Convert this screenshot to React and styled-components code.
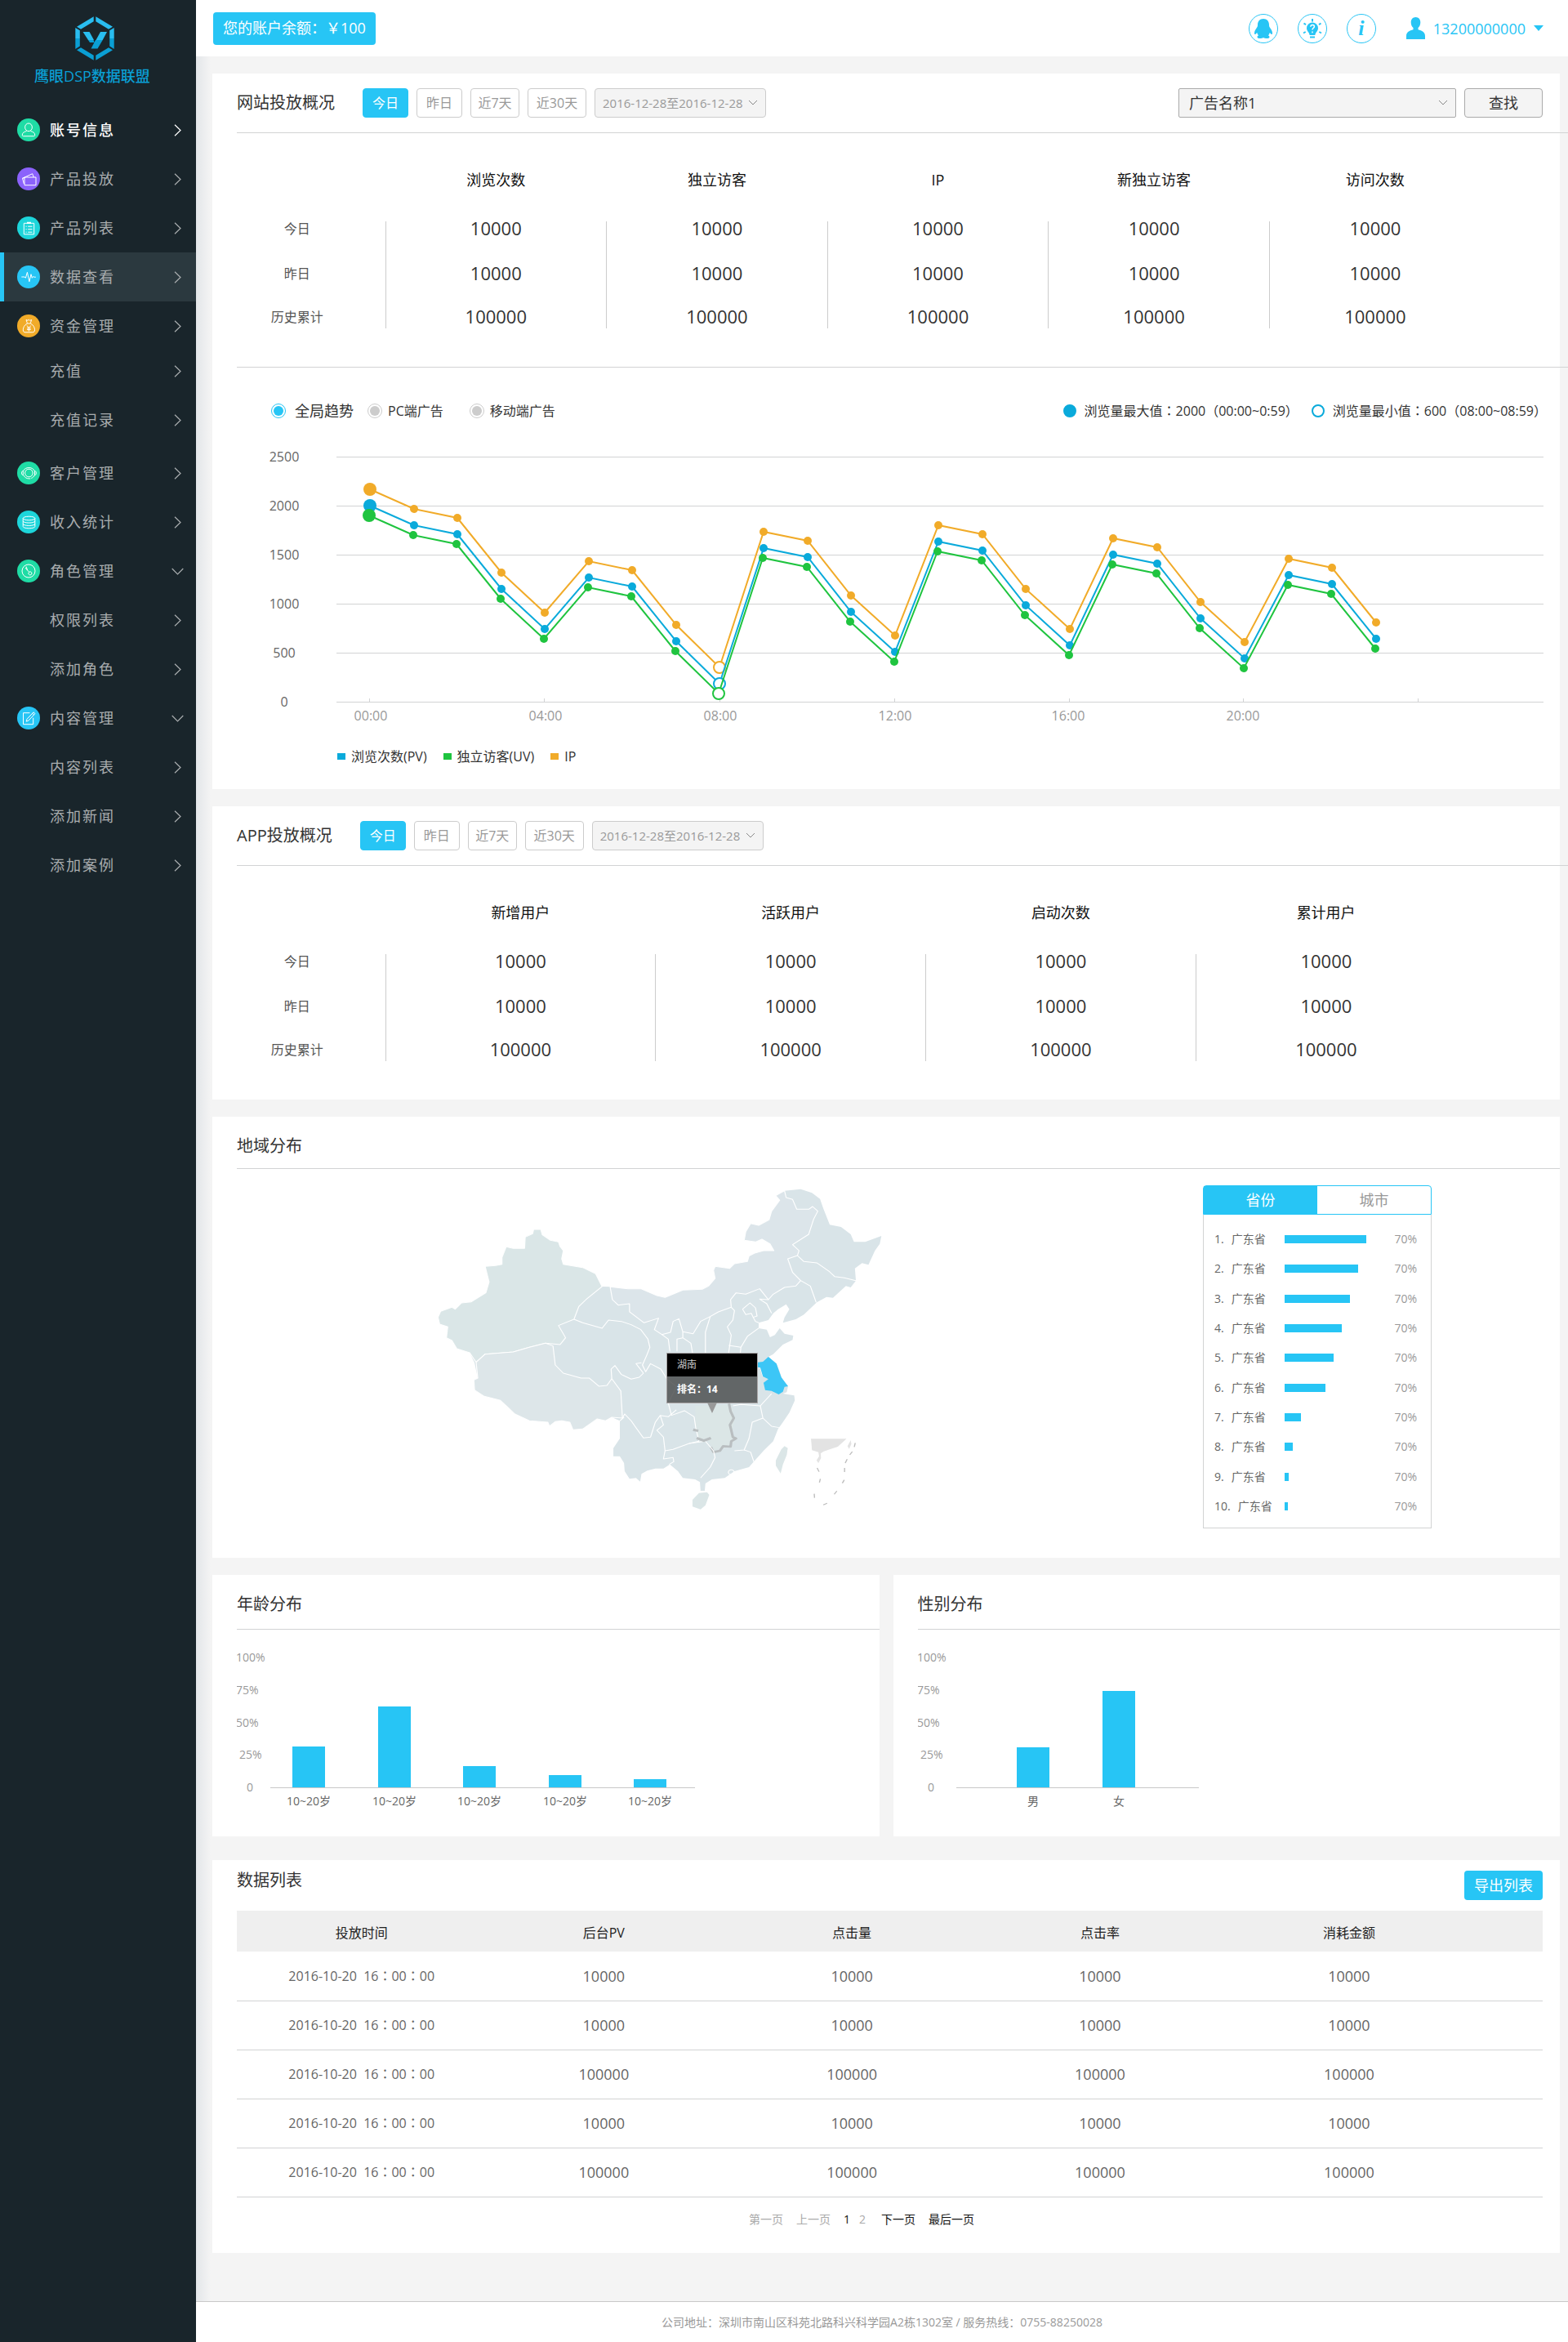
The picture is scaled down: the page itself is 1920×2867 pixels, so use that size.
import React, { useState } from "react";
import styled, { createGlobalStyle, css } from "styled-components";

const CYAN = "#27c5f5";
const LINE = "#d2d3d4";

const GlobalStyle = createGlobalStyle`
  * { box-sizing: border-box; }
  body {
    margin: 0;
    background: #f4f4f4;
    color: #333;
    font-family: "Open Sans", "Noto Sans CJK SC", sans-serif;
    font-size: 16px;
    line-height: 20px;
  }
  button, select, input { font: inherit; color: inherit; margin: 0; }
  button { cursor: pointer; padding: 0; }
  a { color: inherit; text-decoration: none; }
  ul, ol { list-style: none; margin: 0; padding: 0; }
  h1, h2, p { margin: 0; font-weight: 400; }
  svg { display: block; }
`;

/* ---------- page frame ---------- */

const Page = styled.div`
  display: flex;
  min-height: 100vh;
`;

const Sidebar = styled.aside`
  flex: 0 0 240px;
  background: #19252b;
`;

const Brand = styled.a`
  display: flex;
  flex-direction: column;
  align-items: center;
  gap: 9px;
  height: 129px;
  padding: 20px 14px 0 0;
  color: #0a9fd4;
  font-size: 18px;
  font-weight: 500;
`;

const BrandMark = styled.svg`
  width: 48px;
  height: 54px;
  margin-left: 5px;
`;

const NavGroup = styled.ul`
  margin: ${(p) => (p.$raised ? "-5px 0 5px" : "0")};
`;

const NavLink = styled.a`
  display: flex;
  align-items: center;
  height: 60px;
  padding: 0 ${(p) => (p.$wide ? "15px" : "18px")} 0 ${(p) => (p.$sub ? "61px" : "16px")};
  border-left: ${(p) => (p.$sub ? "0" : "5px")} solid ${(p) => (p.$active ? CYAN : "transparent")};
  background: ${(p) => (p.$active ? "#2b393f" : "transparent")};
  color: ${(p) => (p.$bright ? "#fff" : "#a9adaf")};
  font-size: 18px;
  font-weight: ${(p) => (p.$bright ? 500 : 400)};
  letter-spacing: 2px;
`;

const NavIcon = styled.svg`
  width: 28px;
  height: 28px;
  margin-right: 12px;
  border-radius: 50%;
  background: ${(p) => p.$color};
  fill: none;
  stroke: #fff;
  stroke-width: 1;
`;

const Arrow = styled.svg`
  margin-left: auto;
  fill: none;
  stroke: currentColor;
  stroke-width: 1.2;
`;

const Column = styled.div`
  display: flex;
  flex: 1;
  flex-direction: column;
  min-width: 0;
`;

const Header = styled.header`
  display: flex;
  align-items: center;
  justify-content: space-between;
  height: 69px;
  padding: 0 30px 0 21px;
  background: #fff;
`;

const Balance = styled.button`
  height: 40px;
  padding: 0 12px 2px;
  border: 0;
  border-radius: 4px;
  background: ${CYAN};
  color: #fff;
  font-size: 18px;
`;

const HeaderTools = styled.div`
  display: flex;
  align-items: center;
  gap: 24px;
  color: ${CYAN};
`;

const RoundButton = styled.button`
  display: grid;
  place-items: center;
  width: 36px;
  height: 36px;
  border: 1px solid ${CYAN};
  border-radius: 50%;
  background: #fff;
  color: ${CYAN};
  font: italic 700 26px "Liberation Serif", serif;
  line-height: 30px;
`;

const Account = styled.button`
  display: flex;
  align-items: center;
  gap: 10px;
  margin-left: 13px;
  border: 0;
  background: none;
  color: ${CYAN};
  font-size: 18px;
`;

const Content = styled.main`
  display: flex;
  flex: 1;
  flex-direction: column;
  gap: 21px;
  padding: 21px 10px 59px 20px;
  background: linear-gradient(to right, #e3e6e9, #f4f4f4 18px);
`;

const Footer = styled.footer`
  padding: 15px 0;
  border-top: 1px solid #c9c9c9;
  background: #fff;
  color: #999;
  font-size: 14px;
  text-align: center;
`;

/* ---------- cards ---------- */

const Card = styled.section`
  min-width: 0;
  padding: 0 0 ${(p) => p.$bottom || 0}px 30px;
  background: #fff;
`;

const CardHead = styled.div`
  display: flex;
  align-items: center;
  justify-content: space-between;
  height: ${(p) => p.$height || 72}px;
  padding: ${(p) => 72 - (p.$height || 72)}px 21px 0 0;
`;

const Title = styled.h2`
  color: #333;
  font-size: 20px;
  line-height: 24px;
`;

const Divider = styled.hr`
  height: 1px;
  margin: 0 ${(p) => (p.$overrun ? "-10px" : "0")} 0 0;
  border: 0;
  background: ${LINE};
`;

const Row = styled.div`
  display: flex;
  align-items: center;
  gap: ${(p) => p.$gap || 10}px;
`;

const RangeButton = styled.button`
  width: ${(p) => p.$w}px;
  height: 36px;
  border: 1px solid ${(p) => (p.$on ? CYAN : "#ccc")};
  border-radius: 4px;
  background: ${(p) => (p.$on ? CYAN : "#fff")};
  color: ${(p) => (p.$on ? "#fff" : "#999")};
`;

const SelectBox = styled.div`
  position: relative;
  display: flex;
  svg {
    position: absolute;
    right: 10px;
    top: 14px;
    fill: none;
    stroke: #888;
    pointer-events: none;
  }
`;

const Select = styled.select`
  appearance: none;
  width: ${(p) => p.$w}px;
  height: 36px;
  padding: 0 ${(p) => (p.$large ? 12 : 9)}px;
  border: 1px solid ${(p) => (p.$large ? "#aaa" : "#ccc")};
  border-radius: ${(p) => (p.$large ? 2 : 4)}px;
  background: #f4f4f4;
  color: ${(p) => (p.$large ? "#333" : "#999")};
  font-size: ${(p) => (p.$large ? 18 : 15)}px;
`;

const ActionButton = styled.button`
  width: 96px;
  height: 36px;
  border: ${(p) => (p.$solid ? "0" : "1px solid #aaa")};
  border-radius: 4px;
  background: ${(p) => (p.$solid ? CYAN : "#f4f4f4")};
  color: ${(p) => (p.$solid ? "#fff" : "#333")};
  font-size: 18px;
`;

/* ---------- overview figures ---------- */

const FigureWrap = styled.div`
  padding-right: ${(p) => p.$right}px;
  padding-bottom: 47px;
`;

const Figures = styled.table`
  width: 100%;
  table-layout: fixed;
  border-collapse: collapse;
  color: #333;
  text-align: center;
  thead th {
    height: 108px;
    padding: 47px 0 41px;
    color: #111;
    font-size: 18px;
    font-weight: 400;
    line-height: 20px;
  }
  thead td { width: 182px; }
  tbody th {
    padding: 0 34px 0 0;
    color: #555;
    font-size: 16px;
    font-weight: 400;
    line-height: 18px;
    vertical-align: top;
  }
  tbody td {
    padding: 0;
    border-left: 1px solid #ccc;
    font-size: 22px;
    line-height: 16px;
    vertical-align: top;
  }
  tbody tr:nth-child(1) { height: 55px; }
  tbody tr:nth-child(2) { height: 53px; }
  tbody tr:nth-child(3) { height: 23px; }
  tr > :nth-last-child(-n + ${(p) => p.$narrow}) { padding-right: 12px; }
`;

/* ---------- trend chart ---------- */

const TrendBar = styled.div`
  display: flex;
  align-items: flex-start;
  justify-content: space-between;
  height: 95px;
  padding: 43px 16px 0 42px;
`;

const RadioLabel = styled.label`
  display: flex;
  align-items: center;
  gap: ${(p) => (p.$large ? 11 : 7)}px;
  margin-right: ${(p) => (p.$large ? 16 : 31)}px;
  font-size: ${(p) => (p.$large ? 18 : 16)}px;
`;

const Radio = styled.input`
  appearance: none;
  width: 18px;
  height: 18px;
  padding: 2px;
  border: 1px solid #ccc;
  border-radius: 50%;
  background: #ccc content-box;
  &:checked {
    border-color: ${CYAN};
    background-color: ${CYAN};
  }
`;

const Marker = styled.span`
  width: 16px;
  height: 16px;
  margin-right: 10px;
  border: 2px solid #0aaadb;
  border-radius: 50%;
  background: ${(p) => (p.$filled ? "#0aaadb" : "#fff")};
`;

const Extreme = styled.span`
  display: flex;
  align-items: center;
  font-family: "Open Sans", "Noto Sans CJK TC", sans-serif;
`;

const TrendSvg = styled.svg`
  width: calc(100% - 20px);
  height: auto;
  font-size: 16px;
  text-anchor: middle;
  polyline { fill: none; stroke-width: 2; }
`;

const Legend = styled.div`
  display: flex;
  align-items: center;
  gap: 20px;
  padding: 29px 0 30px 123px;
`;

const LegendItem = styled.span`
  display: flex;
  align-items: center;
  gap: 7px;
  &::before {
    content: "";
    width: 10px;
    height: 8px;
    background: ${(p) => p.$color};
  }
`;

/* ---------- region ---------- */

const Region = styled.div`
  display: flex;
  align-items: flex-start;
  justify-content: space-between;
  padding: 0 157px 36px 210px;
`;

const MapBox = styled.div`
  position: relative;
  width: 620px;
  height: 440px;
`;

const Tooltip = styled.div`
  position: absolute;
  left: 316px;
  top: 225px;
  width: 112px;
  border: 1px solid #a9a5a6;
  background: rgba(75, 77, 78, 0.84);
  color: #fff;
  font-size: 12px;
  font-weight: 700;
  line-height: 32px;
  padding-left: 12px;
  &::after {
    content: "";
    position: absolute;
    left: 49px;
    top: 60px;
    border: 6px solid transparent;
    border-top: 13px solid #999;
    border-bottom: 0;
  }
`;

const TooltipName = styled.div`
  margin-left: -12px;
  padding-left: 12px;
  background: #000;
  color: #ccc;
  font-weight: 400;
  line-height: 28px;
`;

const Ranking = styled.div`
  flex: 0 0 280px;
  margin-top: 20px;
`;

const Tabs = styled.div`
  display: flex;
  height: 36px;
  border: 1px solid ${CYAN};
  border-radius: 4px 4px 0 0;
`;

const Tab = styled.button`
  flex: 1;
  border: 0;
  background: ${(p) => (p.$on ? CYAN : "transparent")};
  color: ${(p) => (p.$on ? "#fff" : "#999")};
  font-size: 18px;
`;

const RankList = styled.ol`
  display: grid;
  grid-template-rows: repeat(10, 1fr);
  height: 384px;
  padding: 12px 17px 8px 13px;
  border: 1px solid ${LINE};
  border-top: 0;
  color: #666;
  font-size: 14px;
`;

const RankItem = styled.li`
  display: grid;
  grid-template-columns: 86px 1fr auto;
  align-items: center;
`;

const RankName = styled.span`
  display: flex;
  gap: 9px;
`;

const RankBar = styled.span`
  height: 10px;
  background: ${CYAN};
`;

const Percent = styled.span`
  color: #999;
`;

/* ---------- small bar charts ---------- */

const Halves = styled.div`
  display: grid;
  grid-template-columns: 1fr 1fr;
  gap: 17px;
  margin-bottom: 8px;
`;

const BarSvg = styled.svg`
  width: 620px;
  height: 253px;
  font-size: 14px;
`;

/* ---------- data list ---------- */

const ListHead = styled.div`
  display: flex;
  align-items: flex-start;
  justify-content: space-between;
  height: 62px;
  padding: 13px 21px 0 0;
`;

const DataTable = styled.table`
  width: calc(100% - 21px);
  table-layout: fixed;
  border-collapse: collapse;
  text-align: center;
  th {
    height: 50px;
    padding: 4px 0 0;
    background: #efefef;
    color: #222;
    font-size: 16px;
    font-weight: 400;
  }
  td {
    height: 60px;
    padding: 0;
    border-bottom: 1px solid ${LINE};
    color: #666;
    font-size: 18px;
  }
  td:first-child {
    font-family: "Open Sans", "Noto Sans CJK TC", sans-serif;
    font-size: 16px;
    white-space: pre;
  }
  tr > :first-child { width: 18.6%; padding-left: 8px; }
  tr > :last-child { width: 24.4%; padding-right: 84px; }
`;

const Pager = styled.nav`
  display: flex;
  justify-content: center;
  gap: 16px;
  padding: 17px 90px 0 0;
  color: #aaa;
  font-size: 14px;
`;

const PageNumbers = styled.span`
  display: flex;
  gap: 11px;
  margin-right: 3px;
`;

const PageLink = styled.a`
  ${(p) => p.$strong && css`color: #111;`}
`;

/* ---------- drawings ---------- */

const Chevron = ({ w = 12, h = 7 }) => (
  <svg width={w} height={h} viewBox="0 0 12 7" aria-hidden="true">
    <path d="M1 1l5 5 5-5" />
  </svg>
);

const icons = {
  user: (
    <>
      <ellipse cx="14" cy="10.8" rx="4.4" ry="4.8" />
      <path d="M11.5 15.5c-3 .8-5.2 2.200-5.200 4.600 0 1.200.4 1.600 1.300 1.600h12.800c.9 0 1.300-.4 1.300-1.600 0-2.400-2.200-3.800-5.200-4.600" />
    </>
  ),
  box: <path d="M9 12h14v9.700H9zM8.300 20L6.500 13.200 18.700 7.700 20.300 12M6.500 13.200l3-.6" />,
  list: (
    <>
      <path d="M8.300 8.300h12.400v13.500H8.300z" />
      <path d="M12 7.800h5" strokeWidth="2" />
      <path d="M10.500 12.200h1.200m1.500 0h5.300M10.500 15.700h1.200m1.500 0h5.300M10.500 19.200h1.200m1.500 0h5.300" />
    </>
  ),
  pulse: <path d="M5.300 14h3.900l1.200 1.300L12.400 8.300l2.500 11.500L17 10.700l1.300 4.600 1.500-1.900.8.800h2.200" />,
  money: (
    <>
      <path d="M12.300 10.500L11 6.500l2 .8 1.300-1 1.300 1 2-.8-1.200 4M12 11h4.800M12.300 11c-3.500 2-5 5-5 7.800 0 2.200 1 3 2.700 3h8.800c1.700 0 2.700-.8 2.700-3 0-2.800-1.500-5.800-5-7.800" />
      <path d="M12 13.500l2.400 3 2.400-3M14.400 16.500v4M12 16.800h4.800M12 18.600h4.800" />
    </>
  ),
  headset: (
    <>
      <circle cx="14.400" cy="14" r="4.800" />
      <path d="M7.500 11.500C9 8.700 11.500 7.500 14.400 7.500s5.400 1.200 6.900 4M7.300 11.300c-2.400.6-2.400 4.800 0 5.600zM21.500 11.300c2.400.6 2.400 4.800 0 5.600zM8 17c1.500 2.600 3.700 3.900 6.400 3.900h1.800M21 17c-.8 1.800-2 2.800-3.700 3.400" />
    </>
  ),
  coins: (
    <>
      <ellipse cx="14.500" cy="9.500" rx="7.300" ry="2.300" />
      <path d="M7.200 9.500v10c0 3 14.600 3 14.600 0v-10M7.200 12.800c0 3 14.600 3 14.600 0M7.200 16.200c0 3 14.600 3 14.600 0" />
    </>
  ),
  role: (
    <>
      <circle cx="14" cy="14" r="8" />
      <path d="M11 8.500l1.700 4.800 2 1.800M10 10l2.700 3.300M17.300 18.300a2 2 0 1 1-2.500-3.100 2 2 0 0 1 2.500 3.100" />
    </>
  ),
  edit: <path d="M15.500 7.700H7.500v14h12.200v-8M20 6.800l1.900 1.800-8 8.600-2.700 1 .8-2.900zM18.600 8.300l1.900 1.800" />,
};

const china =
  "92,545 100,523 135,508 145,515 165,492 195,488 240,455 250,415 238,358 270,355 290,350 290,325 303,286 325,292 360,292 362,250 385,238 388,222 410,222 415,242 440,262 465,268 470,285 480,300 475,330 480,350 540,362 580,385 600,432 625,433 680,440 720,440 770,465 795,472 850,445 910,442 930,430 950,402 945,372 950,358 995,365 1010,348 1050,340 1055,320 1075,308 1100,300 1132,300 1120,275 1095,258 1075,268 1040,262 1045,230 1060,200 1085,207 1117,187 1125,155 1150,115 1138,98 1165,80 1215,74 1250,88 1275,110 1285,145 1305,205 1340,213 1370,240 1380,268 1415,268 1465,246 1460,275 1445,300 1425,352 1405,346 1383,365 1386,410 1370,435 1355,430 1315,473 1295,470 1265,490 1225,535 1200,552 1160,565 1165,545 1180,515 1170,497 1145,515 1130,530 1115,555 1085,565 1085,585 1110,590 1120,618 1135,610 1150,585 1165,605 1192,612 1190,628 1160,645 1130,680 1115,690 1140,715 1150,745 1160,780 1176,798 1172,820 1160,825 1195,832 1197,850 1180,895 1160,930 1145,955 1130,1000 1100,1035 1070,1075 1055,1095 1010,1110 980,1135 940,1140 920,1155 918,1182 905,1182 903,1150 888,1140 850,1135 835,1110 810,1085 790,1100 765,1100 740,1108 722,1120 718,1148 705,1135 685,1138 670,1110 668,1080 655,1055 635,1055 635,1025 655,990 655,925 630,912 610,925 585,918 540,955 510,958 500,930 475,925 455,928 437,945 432,930 375,925 330,900 305,872 285,850 235,835 205,812 203,775 215,768 205,712 190,675 150,660 135,630 118,620 122,580 97,570";

const xinjiang =
  "92,545 100,523 135,508 145,515 165,492 195,488 240,455 250,415 238,358 270,355 290,350 290,325 303,286 325,292 360,292 362,250 385,238 388,222 410,222 415,242 440,262 465,268 470,285 480,300 475,330 480,350 540,362 580,385 600,432 550,480 528,505 513,552 465,575 487,620 470,645 425,640 375,655 325,672 238,680 210,710 190,675 150,660 135,630 118,620 122,580 97,570";

const tibet =
  "210,710 238,680 325,672 375,655 425,640 448,650 455,720 480,750 535,768 560,768 590,798 615,795 630,770 658,815 663,915 630,912 610,925 585,918 540,955 510,958 500,930 475,925 455,928 437,945 432,930 375,925 330,900 305,872 285,850 235,835 205,812 203,775 215,768";

const innerMongolia =
  "625,433 680,440 720,440 770,465 795,472 850,445 910,442 930,430 950,402 945,372 950,358 995,365 1010,348 1050,340 1055,320 1075,308 1100,300 1132,300 1120,275 1095,258 1075,268 1040,262 1045,230 1060,200 1085,207 1117,187 1125,155 1150,115 1138,98 1165,80 1170,105 1190,112 1203,148 1240,148 1252,138 1268,155 1255,185 1240,240 1190,278 1210,300 1205,318 1175,330 1190,380 1215,410 1200,430 1165,435 1130,460 1115,480 1088,440 1045,460 1015,455 998,480 1000,508 960,525 935,542 905,560 882,605 850,598 838,550 820,560 812,600 785,608 762,590 775,548 730,565 685,525 685,495 650,500 632,480";

const borders = [
  "513,552 540,565 600,585 620,555 660,560 690,572 720,590 742,625 748,655 738,685 725,720 735,745 750,715 782,735 800,770",
  "630,770 628,735 640,722 660,755 690,772 715,765 728,750 705,715 722,712",
  "663,915 670,900 690,925 705,950 728,988 750,985 765,930 780,905 805,910 830,885",
  "655,925 668,912",
  "800,770 830,800 805,860 815,905 855,888 885,910 890,950 900,1000",
  "780,905 790,940 770,960 790,985 795,1035 820,1030 870,1008 900,1000",
  "795,1035 790,1065 820,1060 822,1075 808,1085",
  "870,1008 920,1000 945,1035 950,1060 935,1095 905,1135",
  "785,608 805,625 810,670",
  "850,598 850,620 832,625 832,670",
  "850,620 875,640 880,675",
  "935,542 920,600 920,675",
  "1000,508 1010,520 1005,555 988,580 1000,610 992,675",
  "992,648 1030,655 1028,675",
  "1030,655 1050,615 1085,585",
  "1115,480 1088,478 1110,495 1125,530",
  "1035,515 1058,492 1075,510 1080,540 1068,545 1062,530 1045,535 1035,515",
  "1068,545 1075,560 1085,565",
  "1215,410 1245,430 1263,490",
  "1205,318 1225,340 1265,345 1305,378 1320,395 1350,400 1386,410",
  "1005,870 1030,865 1090,870 1125,825",
  "1090,870 1098,915 1065,930 1055,990 1040,1032 1010,1035",
  "1098,915 1125,945 1148,950",
  "1040,1032 1060,1040 1070,1075",
  "1098,762 1090,730 1082,728",
];

function ChinaMap() {
  return (
    <svg width="620" height="440" viewBox="0 0 620 440" role="img" aria-label="地域分布">
      <g transform="scale(0.3954 0.3333)" strokeLinejoin="round">
        <polygon points={china} fill="#d9e4e8" />
        <polygon points={xinjiang} fill="#dae6e7" stroke="#fff" strokeWidth="3" />
        <polygon points={tibet} fill="#dde6e9" stroke="#fff" strokeWidth="3" />
        <polygon points={innerMongolia} fill="#dce5ea" stroke="#fff" strokeWidth="3" />
        <path d="M888 870L1000 865L1010 920L1000 980L1010 1000L980 1025L945 1035L930 1000L900 995L890 950Z" fill="#dbe6e6" />
        <polyline points="993,862 998,890 1008,915 996,940 1005,985 1015,990 1000,1000 998,1020 975,1018 965,1035 945,1040 937,1022" fill="none" stroke="#b9bec0" strokeWidth="8" />
        {borders.map((b) => (
          <polyline key={b} points={b} fill="none" stroke="#fff" strokeWidth="3" />
        ))}
        <polyline points="882,958 898,962" fill="none" stroke="#b9bec0" strokeWidth="9" />
        <polyline points="893,988 915,998 937,988" fill="none" stroke="#b9bec0" strokeWidth="9" />
        <circle cx="1000" cy="1114" r="9" fill="none" stroke="#fff" strokeWidth="3" />
        <polygon points="1082,710 1098,708 1115,690 1140,715 1155,765 1176,798 1165,800 1160,818 1147,828 1125,815 1105,812 1100,785 1115,772 1098,762 1090,730 1082,728" fill="#3cc6f6" />
        <polygon points="1165,1018 1175,1025 1172,1050 1160,1085 1153,1118 1138,1090 1138,1070 1155,1030" fill="#dbe6e7" />
        <polygon points="880,1215 900,1190 925,1187 932,1197 920,1235 905,1250 880,1240" fill="#dbe6e7" />
        <g fill="#e3e3e3">
          <polygon points="1247,991 1357,991 1330,1020 1285,1038 1277,1045 1278,1062 1270,1080 1264,1070 1272,1055 1270,1040 1250,1033" />
          <polygon points="1370,996 1372,1010 1365,1028 1360,1018" />
        </g>
        <path
          d="M1384 1006l-3 15M1375 1038l-8 12M1359 1066l-6 14M1351 1098v15M1350 1142l-6 12M1327 1183l-8 12M1297 1228l-12 6M1257 1193l1 15M1276 1138l-3 14M1266 1098l6 14"
          fill="none"
          stroke="#bdbdbd"
          strokeWidth="3.500"
        />
      </g>
    </svg>
  );
}

/* ---------- data ---------- */

const menu = [
  { items: [
    { text: "账号信息", icon: "user", color: "#1fdca5", bright: true },
    { text: "产品投放", icon: "box", color: "#8b62fb" },
    { text: "产品列表", icon: "list", color: "#1dd5da" },
    { text: "数据查看", icon: "pulse", color: CYAN, active: true },
    { text: "资金管理", icon: "money", color: "#f1ab29" },
  ] },
  { raised: true, items: [{ text: "充值" }, { text: "充值记录" }] },
  { items: [
    { text: "客户管理", icon: "headset", color: "#1fdca5" },
    { text: "收入统计", icon: "coins", color: "#1dd5da" },
    { text: "角色管理", icon: "role", color: "#1fdca5", open: true },
    { text: "权限列表" },
    { text: "添加角色" },
    { text: "内容管理", icon: "edit", color: CYAN, open: true },
    { text: "内容列表" },
    { text: "添加新闻" },
    { text: "添加案例" },
  ] },
];

const ranges = [["今日", 56], ["昨日", 56], ["近7天", 60], ["近30天", 72]];

const series = [54, 78, 89, 156, 205, 142, 153, 220, 272, 106, 117, 184, 233, 98, 109, 176, 225, 114, 125, 192, 241, 139, 150, 217];
const lines = [
  { color: "#f1ab29", dx: 0, dy: 0 },
  { color: "#0aaadb", dx: 0, dy: 20 },
  { color: "#1fc43f", dx: -1, dy: 32 },
];
const pointX = (i) => Math.round(163 + i * 53.55);

const rankBars = [100, 90, 80, 70, 60, 50, 20, 10, 5, 4];

const records = ["10000", "10000", "100000", "10000", "100000"];

/* ---------- sections ---------- */

function RangeFilter({ title }) {
  const [range, setRange] = useState("今日");
  return (
    <Row $gap={34}>
      <Title>{title}</Title>
      <Row>
        {ranges.map(([text, w]) => (
          <RangeButton key={text} type="button" $w={w} $on={text === range} onClick={() => setRange(text)}>
            {text}
          </RangeButton>
        ))}
        <SelectBox>
          <Select $w={210} aria-label="日期">
            <option>2016-12-28至2016-12-28</option>
          </Select>
          <Chevron />
        </SelectBox>
      </Row>
    </Row>
  );
}

function FigureTable({ heads, right, narrow }) {
  const rows = [["今日", "10000"], ["昨日", "10000"], ["历史累计", "100000"]];
  return (
    <FigureWrap $right={right}>
      <Figures $narrow={narrow}>
        <thead>
          <tr>
            <td />
            {heads.map((h) => <th key={h} scope="col">{h}</th>)}
          </tr>
        </thead>
        <tbody>
          {rows.map(([label, value]) => (
            <tr key={label}>
              <th scope="row">{label}</th>
              {heads.map((h) => <td key={h}>{value}</td>)}
            </tr>
          ))}
        </tbody>
      </Figures>
    </FigureWrap>
  );
}

function TrendChart() {
  return (
    <TrendSvg viewBox="0 0 1600 342" role="img" aria-label="全局趋势">
      {[2500, 2000, 1500, 1000, 500, 0].map((v, i) => (
        <g key={v}>
          <text x="58" y={20 + i * 60} fill="#666">{v}</text>
          <rect x="122" y={14 + i * 60} width="1478" height="1" fill={LINE} />
        </g>
      ))}
      {[162, 376, 591, 805, 1019, 1232, 1446].map((x) => (
        <rect key={x} x={x} y="310" width="1" height="4" fill={LINE} />
      ))}
      {["00:00", "04:00", "08:00", "12:00", "16:00", "20:00"].map((t, i) => (
        <text key={t} x={164 + i * 214 - (i > 3 ? 2 : 0)} y="337" fill="#999">{t}</text>
      ))}
      {lines.map(({ color, dx, dy }) => (
        <g key={color}>
          <polyline stroke={color} points={series.map((y, i) => `${pointX(i) + dx},${y + dy}`).join(" ")} />
          {series.map((y, i) => (
            <circle
              key={i}
              cx={pointX(i) + dx}
              cy={y + dy}
              r={i === 0 ? 8 : i === 8 ? 7 : 5}
              fill={i === 8 ? "#fff" : color}
              stroke={i === 8 ? color : "none"}
              strokeWidth="2"
            />
          ))}
        </g>
      ))}
    </TrendSvg>
  );
}

function BarChart({ label, axis, ticks, bars }) {
  return (
    <BarSvg viewBox="0 0 620 253" role="img" aria-label={label}>
      {ticks.map(([t, x, y]) => (
        <text key={t} x={x} y={y} fill="#999">{t}</text>
      ))}
      <rect x={axis[0]} y="193" width={axis[1]} height="1" fill="#c8c8c8" />
      {bars.map(([t, x, h]) => (
        <g key={x}>
          <rect x={x} y={193 - h} width="40" height={h} fill={CYAN} />
          <text x={x + 20} y="215" fill="#666" textAnchor="middle">{t}</text>
        </g>
      ))}
    </BarSvg>
  );
}

const axisTicks = [["100%", -1, 39], ["75%", -1, 79], ["50%", -1, 119], ["25%", 3, 158], ["0", 12, 198]];

export default function App() {
  const [trend, setTrend] = useState("全局趋势");
  const [tab, setTab] = useState("省份");

  return (
    <Page>
      <GlobalStyle />
      <Sidebar>
        <Brand href="#">
          <BrandMark viewBox="0 0 48 54" aria-hidden="true">
            <path fill="#29bdf0" d="M22.700.3v6L7 15.700l-5-3zM25.300.3v6L41 15.700l5-3zM.3 14l5.500 3.300V27H.3zM47.700 14l-5.500 3.300V27h5.500zM9.500 19h8l5.500 10 2.500 0 5.500-10h8L33.700 29H16z" />
            <path fill="#0a9fd4" d="M.3 27h5.500v9.500L.3 40zM47.700 27h-5.500v9.500l5.500 3.500zM22.700 53.700v-6L7 38.300l-5 3zM25.300 53.700v-6L41 38.300l5 3zM16 29h6.500l1 3H18zM25 29h8.700L27.500 39.500h-8z" />
          </BrandMark>
          鹰眼DSP数据联盟
        </Brand>
        <nav>
          {menu.map((group, g) => (
            <NavGroup key={g} $raised={group.raised}>
              {group.items.map((it) => (
                <li key={it.text}>
                  <NavLink href="#" $sub={!it.icon} $active={it.active} $bright={it.bright} $wide={it.open}>
                    {it.icon && (
                      <NavIcon viewBox="0 0 28 28" $color={it.color} aria-hidden="true">{icons[it.icon]}</NavIcon>
                    )}
                    {it.text}
                    {it.open ? (
                      <Arrow width="15" height="9" viewBox="0 0 15 9"><path d="M.7 1l6.800 6.800L14.300 1" /></Arrow>
                    ) : (
                      <Arrow width="9" height="15" viewBox="0 0 9 15"><path d="M1 .7l7 6.800-7 6.800" /></Arrow>
                    )}
                  </NavLink>
                </li>
              ))}
            </NavGroup>
          ))}
        </nav>
      </Sidebar>

      <Column>
        <Header>
          <Balance type="button">您的账户余额：￥100</Balance>
          <HeaderTools>
            <RoundButton type="button" aria-label="QQ">
              <svg width="22" height="24" viewBox="0 0 22 24" fill="currentColor">
                <path d="M11 0C6.500 0 4 3.200 4 7.300c0 1.700-.2 2.400-1 3.500C1.500 13 0 15.300 0 17.500c0 1.300.7 2 1.500 1.300l1.700-1.700c.3 1.400.9 2.400 1.800 3.300-2.200.8-2 3.300.7 3.500 2 .2 4-.2 5.300-1 1.300.8 3.300 1.200 5.300 1 2.700-.2 2.900-2.700.7-3.500.9-.9 1.500-1.900 1.800-3.300l1.700 1.700c.8.700 1.500 0 1.500-1.300 0-2.200-1.500-4.500-3-6.700-.8-1.100-1-1.800-1-3.500C18 3.200 15.500 0 11 0z" />
              </svg>
            </RoundButton>
            <RoundButton type="button" aria-label="帮助">
              <svg width="24" height="24" viewBox="0 0 24 24" fill="none" stroke="currentColor" strokeWidth="2">
                <path d="M12 0v3.500M1.500 5.500l2.500 1.700M22.500 5.500L20 7.200M1 17.500l2.700-1.500M23 17.500L20.300 16" />
                <path d="M12 4.500a7 7 0 0 0-7 7c0 3.500 3 4.700 3.700 8.500h6.600c.7-3.800 3.700-5 3.700-8.500a7 7 0 0 0-7-7z" fill="currentColor" stroke="none" />
                <path d="M9 22.500h6" />
                <path d="M9.800 9.700c0-3 4.600-2.700 4.600-.2 0 1.800-2.400 1.800-2.400 4M12 15.500v1.800" stroke="#fff" strokeWidth="1.500" />
              </svg>
            </RoundButton>
            <RoundButton type="button">i</RoundButton>
            <Account type="button">
              <svg width="23" height="27" viewBox="0 0 23 27" fill="currentColor" aria-hidden="true">
                <path d="M11.500 0C8 0 5.700 2.800 5.700 6.300c0 3 1 5.300 2.800 6.700v2.300C4 16.300 0 18.500 0 23v4h23v-4c0-4.500-4-6.700-8.500-7.700V13c1.800-1.400 2.800-3.700 2.800-6.700C17.300 2.800 15 0 11.500 0z" />
              </svg>
              13200000000
              <svg width="12" height="7" viewBox="0 0 12 7" fill="currentColor" aria-hidden="true">
                <path d="M0 0h12L6 7z" />
              </svg>
            </Account>
          </HeaderTools>
        </Header>

        <Content>
          <Card>
            <CardHead>
              <RangeFilter title="网站投放概况" />
              <Row>
                <SelectBox>
                  <Select $w={340} $large aria-label="广告名称">
                    <option>广告名称1</option>
                  </Select>
                  <Chevron />
                </SelectBox>
                <ActionButton type="button">查找</ActionButton>
              </Row>
            </CardHead>
            <Divider $overrun />
            <FigureTable heads={["浏览次数", "独立访客", "IP", "新独立访客", "访问次数"]} right={85} narrow={2} />
            <Divider $overrun />
            <TrendBar>
              <Row $gap={1}>
                {["全局趋势", "PC端广告", "移动端广告"].map((t, i) => (
                  <RadioLabel key={t} $large={i === 0}>
                    <Radio type="radio" name="trend" checked={trend === t} onChange={() => setTrend(t)} />
                    {t}
                  </RadioLabel>
                ))}
              </Row>
              <Row $gap={16}>
                <Extreme><Marker $filled />浏览量最大值：2000（00:00~0:59）</Extreme>
                <Extreme><Marker />浏览量最小值：600（08:00~08:59）</Extreme>
              </Row>
            </TrendBar>
            <TrendChart />
            <Legend>
              <LegendItem $color="#0aaadb">浏览次数(PV)</LegendItem>
              <LegendItem $color="#1fc43f">独立访客(UV)</LegendItem>
              <LegendItem $color="#f1ab29">IP</LegendItem>
            </Legend>
          </Card>

          <Card>
            <CardHead>
              <RangeFilter title="APP投放概况" />
            </CardHead>
            <Divider $overrun />
            <FigureTable heads={["新增用户", "活跃用户", "启动次数", "累计用户"]} right={115} narrow={1} />
          </Card>

          <Card>
            <CardHead $height={63}>
              <Title>地域分布</Title>
            </CardHead>
            <Divider />
            <Region>
              <MapBox>
                <ChinaMap />
                <Tooltip>
                  <TooltipName>湖南</TooltipName>
                  排名：14
                </Tooltip>
              </MapBox>
              <Ranking>
                <Tabs>
                  {["省份", "城市"].map((t) => (
                    <Tab key={t} type="button" $on={t === tab} onClick={() => setTab(t)}>{t}</Tab>
                  ))}
                </Tabs>
                <RankList>
                  {rankBars.map((w, i) => (
                    <RankItem key={w}>
                      <RankName><span>{i + 1}.</span>广东省</RankName>
                      <RankBar style={{ width: w }} />
                      <Percent>70%</Percent>
                    </RankItem>
                  ))}
                </RankList>
              </Ranking>
            </Region>
          </Card>

          <Halves>
            <Card>
              <CardHead $height={66}>
                <Title>年龄分布</Title>
              </CardHead>
              <Divider />
              <BarChart
                label="年龄分布"
                axis={[41, 520]}
                ticks={axisTicks}
                bars={[["10~20岁", 68, 50], ["10~20岁", 173, 99], ["10~20岁", 277, 26], ["10~20岁", 382, 15], ["10~20岁", 486, 10]]}
              />
            </Card>
            <Card>
              <CardHead $height={66}>
                <Title>性别分布</Title>
              </CardHead>
              <Divider />
              <BarChart
                label="性别分布"
                axis={[47, 297]}
                ticks={axisTicks}
                bars={[["男", 121, 49], ["女", 226, 118]]}
              />
            </Card>
          </Halves>

          <Card $bottom={31}>
            <ListHead>
              <Title>数据列表</Title>
              <ActionButton type="button" $solid>导出列表</ActionButton>
            </ListHead>
            <DataTable>
              <thead>
                <tr>
                  {["投放时间", "后台PV", "点击量", "点击率", "消耗金额"].map((h) => (
                    <th key={h} scope="col">{h}</th>
                  ))}
                </tr>
              </thead>
              <tbody>
                {records.map((v, i) => (
                  <tr key={i}>
                    <td>{"2016-10-20  16：00：00"}</td>
                    <td>{v}</td>
                    <td>{v}</td>
                    <td>{v}</td>
                    <td>{v}</td>
                  </tr>
                ))}
              </tbody>
            </DataTable>
            <Pager>
              <PageLink href="#">第一页</PageLink>
              <PageLink href="#">上一页</PageLink>
              <PageNumbers>
                <PageLink href="#" $strong>1</PageLink>
                <PageLink href="#">2</PageLink>
              </PageNumbers>
              <PageLink href="#" $strong>下一页</PageLink>
              <PageLink href="#" $strong>最后一页</PageLink>
            </Pager>
          </Card>
        </Content>

        <Footer>公司地址：深圳市南山区科苑北路科兴科学园A2栋1302室 / 服务热线：0755-88250028</Footer>
      </Column>
    </Page>
  );
}
